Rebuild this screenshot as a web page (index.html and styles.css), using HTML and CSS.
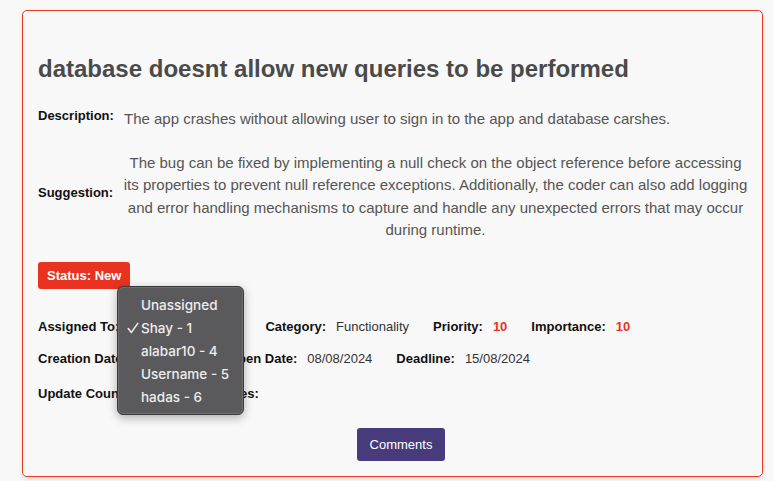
FILE: index.html
```html
<!DOCTYPE html>
<html>
<head>
<meta charset="utf-8">
<link rel="stylesheet" href="styles.css">
</head>
<body>
<div class="card">
  <h1 class="title">database doesnt allow new queries to be performed</h1>
  <div class="field">
    <div class="label">Description:</div>
    <div class="desc">The app crashes without allowing user to sign in to the app and database carshes.</div>
  </div>
  <div class="field sugg-field">
    <div class="label">Suggestion:</div>
    <div class="sugg">The bug can be fixed by implementing a null check on the object reference before accessing its properties to prevent null reference exceptions. Additionally, the coder can also add logging and error handling mechanisms to capture and handle any unexpected errors that may occur during runtime.</div>
  </div>
  <div class="status">Status: New</div>

  <div class="meta-area">
    <div class="row row1">
      <div class="item"><span class="k">Assigned To:</span><span class="select-box">Shay - 1</span></div>
      <div class="item"><span class="k">Category:</span><span class="v">Functionality</span></div>
      <div class="item"><span class="k">Priority:</span><span class="v red">10</span></div>
      <div class="item"><span class="k">Importance:</span><span class="v red">10</span></div>
    </div>
    <div class="row row2">
      <div class="item wide"><span class="k">Creation Date:</span><span class="v">07/08/2024</span></div>
      <div class="item"><span class="k">Open Date:</span><span class="v">08/08/2024</span></div>
      <div class="item"><span class="k">Deadline:</span><span class="v">15/08/2024</span></div>
    </div>
    <div class="row row3">
      <div class="item"><span class="k">Update Count:</span><span class="v">0</span></div>
      <div class="item"><span class="k">Last Updates:</span><span class="v"></span></div>
    </div>

    <ul class="popup">
      <li>Unassigned</li>
      <li class="checked"><svg class="check" width="12" height="12" viewBox="0 0 12 12"><path d="M1.2 6.6 L4.4 10.4 L10.8 1.4" fill="none" stroke="#ececec" stroke-width="1.6" stroke-linecap="round" stroke-linejoin="round"/></svg>Shay - 1</li>
      <li>alabar10 - 4</li>
      <li>Username - 5</li>
      <li>hadas - 6</li>
    </ul>
  </div>

  <div class="actions">
    <button class="btn">Comments</button>
  </div>
</div>
</body>
</html>
```

FILE: styles.css
```css
* { box-sizing: border-box; }
html, body { margin: 0; padding: 0; }
body {
  background: #f8f8f8;
  font-family: "Liberation Sans", Arial, sans-serif;
  width: 773px;
  height: 481px;
  overflow: hidden;
}
.card {
  margin: 10px 10px 0 22px;
  height: 467px;
  border: 1px solid #ec3a25;
  border-radius: 5px;
  background: #f8f8f8;
  box-shadow: 0 2px 4px rgba(0,0,0,0.12);
  padding: 44px 15px 0 15px;
}
.title {
  margin: 0 0 25px 0;
  font-size: 24px;
  font-weight: bold;
  color: #4a4a4a;
  line-height: 27.6px;
}
.field {
  display: flex;
  align-items: center;
}
.label {
  width: 82px;
  flex: none;
  font-size: 13px;
  font-weight: bold;
  color: #111;
  margin-bottom: 8px;
}
.desc, .sugg {
  font-size: 15px;
  line-height: 22.5px;
  color: #555;
}
.desc { padding-left: 4px; }
.sugg { text-align: center; flex: 1; margin-right: -4px; }
.sugg-field { margin-top: 21px; }
.status {
  display: inline-block;
  margin-top: 20px;
  height: 27px;
  line-height: 27px;
  padding: 0 9px;
  background: #e9321f;
  color: #fff;
  font-size: 13px;
  font-weight: bold;
  border-radius: 3px;
}
.meta-area {
  position: relative;
}
.row {
  display: flex;
  align-items: center;
  gap: 24px;
  font-size: 13px;
  height: 16px;
}
.row1 { margin-top: 30px; }
.row2 { margin-top: 16px; }
.row3 { margin-top: 19px; gap: 28px; }
.item { display: flex; align-items: center; gap: 10px; white-space: nowrap; }
.item.wide { margin-right: 2px; }
.k { font-weight: bold; color: #111; }
.v { color: #333; }
.v.red { color: #e9321f; font-weight: bold; }
.select-box {
  width: 112px;
  color: #333;
}
.popup {
  position: absolute;
  left: 79px;
  top: -33px;
  width: 127px;
  margin: 0;
  padding: 7px 0 5px 0;
  list-style: none;
  background: #5a5a5c;
  border: 1px solid #3a3a3a;
  border-radius: 6px;
  box-shadow: 0 3px 10px rgba(0,0,0,0.3), inset 0 0 0 1px rgba(255,255,255,0.12);
  font-family: Inter, "Noto Sans", sans-serif;
  font-size: 13.5px;
  font-weight: 500;
  color: #ededed;
}
.popup li {
  height: 23px;
  line-height: 23px;
  padding-left: 23px;
  position: relative;
}
.check {
  position: absolute;
  left: 9px;
  top: 5px;
}
.actions {
  display: flex;
  justify-content: center;
  padding-left: 17px;
  margin-top: 26px;
}
.btn {
  height: 33px;
  padding: 0 12px;
  min-width: 88px;
  background: #473b7b;
  color: #fff;
  border: none;
  border-radius: 3px;
  font-family: "Liberation Sans", Arial, sans-serif;
  font-size: 13px;
}
```
